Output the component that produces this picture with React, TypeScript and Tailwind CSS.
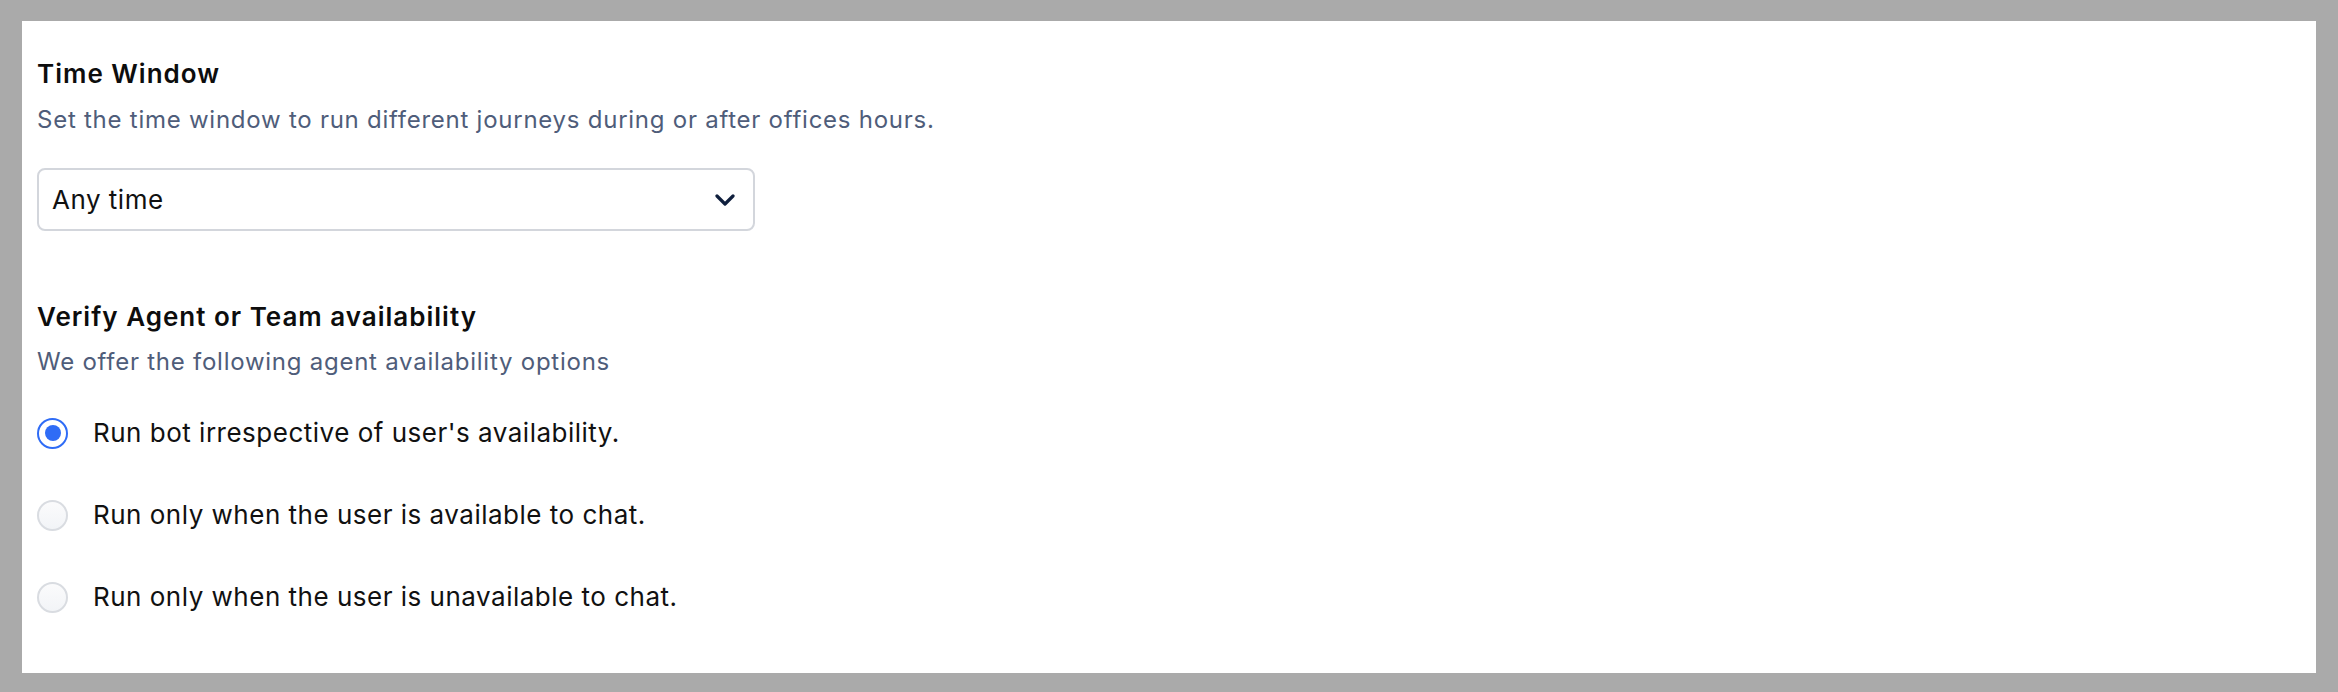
import React from "react";

const font = { fontFamily: "Inter, 'Noto Sans', sans-serif" };

function Radio({ checked, label }: { checked?: boolean; label: string }) {
  return (
    <div className="flex h-[82px] items-center">
      {checked ? (
        <div className="flex h-[31px] w-[31px] shrink-0 items-center justify-center rounded-full border-[2px] border-[#2f6cf6] bg-white">
          <div className="h-[16px] w-[16px] rounded-full bg-[#2f6cf6]" />
        </div>
      ) : (
        <div className="h-[31px] w-[31px] shrink-0 rounded-full border-[2px] border-[#d9dce1] bg-gradient-to-b from-[#fbfbfc] to-[#f2f4f7]" />
      )}
      <span className="ml-[25px] text-[26px] leading-[32px] tracking-[0.5px] text-[#111111]">{label}</span>
    </div>
  );
}

export default function App() {
  return (
    <div
      className="h-[692px] w-full bg-[#aaaaaa] pb-[19px] pl-[22px] pr-[22px] pt-[21px]"
      style={font}
    >
      <div className="flex h-full flex-col bg-white px-[15px] pt-[37px]">
        <h2 className="text-[26px] font-semibold leading-[32px] tracking-[1px] text-[#0d0d0d]">Time Window</h2>
        <p className="mt-[14px] text-[24px] leading-[32px] tracking-[0.75px] text-[#4f5d7a]">
          Set the time window to run different journeys during or after offices hours.
        </p>
        <div className="mt-[32px] flex h-[63px] w-[718px] items-center justify-between rounded-[8px] border-[2px] border-[#d3d6dc] bg-white pl-[13px] pr-[18px]">
          <span className="text-[26px] leading-[32px] tracking-[0.5px] text-[#111111]">Any time</span>
          <svg width="20" height="12" viewBox="0 0 20 12" fill="none">
            <path d="M2 2 L10 10 L18 2" stroke="#0f1f3d" strokeWidth="3.2" strokeLinecap="round" strokeLinejoin="round" />
          </svg>
        </div>

        <h2 className="mt-[70px] text-[26px] font-semibold leading-[32px] tracking-[1px] text-[#0d0d0d]">
          Verify Agent or Team availability
        </h2>
        <p className="mt-[13px] text-[24px] leading-[32px] tracking-[0.75px] text-[#4f5d7a]">
          We offer the following agent availability options
        </p>
        <div className="mt-[14px] flex flex-col">
          <Radio checked label="Run bot irrespective of user's availability." />
          <Radio label="Run only when the user is available to chat." />
          <Radio label="Run only when the user is unavailable to chat." />
        </div>
      </div>
    </div>
  );
}
